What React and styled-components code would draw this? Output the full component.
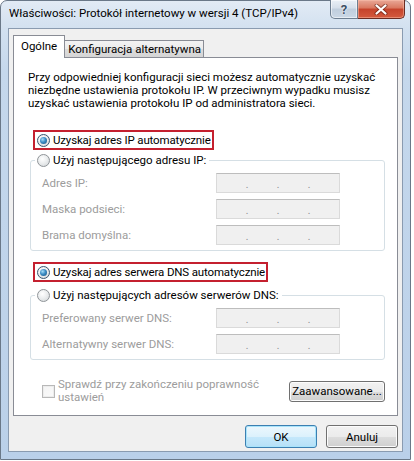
import React from 'react';
import styled, { createGlobalStyle } from 'styled-components';

const GlobalStyle = createGlobalStyle`
  html, body {
    margin: 0;
    padding: 0;
    background: #fff;
  }
  body {
    font-family: Roboto, "Liberation Sans", sans-serif;
    font-size: 11.5px;
    color: #000;
  }
  * {
    box-sizing: border-box;
  }
`;

const Window = styled.div`
  width: 411px;
  height: 460px;
  display: flex;
  flex-direction: column;
  border: 1px solid #6a7888;
  border-radius: 7px 7px 0 0;
  background: linear-gradient(180deg, #e2ebf5 0px, #d3e1f0 26px, #c5d8ec 70px, #bad0e9 100%);
  padding: 0 7px 7px;
`;

const TitleBar = styled.div`
  height: 27px;
  display: flex;
  align-items: flex-start;
`;

const Title = styled.div`
  flex: 1;
  padding: 5px 0 0 1px;
  line-height: 15px;
  white-space: nowrap;
`;

const CaptionButtons = styled.div`
  display: flex;
  margin: -1px -2px 0 0;
`;

const HelpButton = styled.div`
  width: 28px;
  height: 19px;
  display: flex;
  align-items: center;
  justify-content: center;
  border: 1px solid #6e7f91;
  border-top: none;
  border-radius: 0 0 0 5px;
  background: linear-gradient(180deg, #eaf0f6 0%, #d5dfea 45%, #c0cedd 50%, #cbd8e6 100%);
  box-shadow: inset 0 0 0 1px rgba(255, 255, 255, 0.55);
  color: #3d4f66;
  font-weight: bold;
  font-size: 13px;
  text-shadow: 0 0 2px #fff, 0 0 1px #fff;
`;

const CloseButton = styled.div`
  width: 47px;
  height: 19px;
  display: flex;
  align-items: center;
  justify-content: center;
  border: 1px solid #6b2c22;
  border-left: none;
  border-top: none;
  border-radius: 0 0 5px 0;
  background: linear-gradient(180deg, #e9a897 0%, #d9775f 45%, #c5432b 50%, #d45a3e 100%);
  box-shadow: inset 0 0 0 1px rgba(255, 200, 180, 0.45);
`;

const Client = styled.div`
  flex: 1;
  display: flex;
  flex-direction: column;
  background: #f0f0f0;
  border: 1px solid #8a9bb0;
  padding: 6px 4px 0;
`;

const TabStrip = styled.div`
  display: flex;
  align-items: flex-end;
  height: 23px;
  margin-bottom: -1px;
  position: relative;
  z-index: 1;
`;

const Tab = styled.div`
  display: flex;
  align-items: center;
  border: 1px solid #898c95;
  ${p => p.$active ? `
    height: 23px;
    padding: 0 7px 2px;
    background: #fff;
    border-bottom: none;
  ` : `
    height: 18px;
    padding: 0 2px 0 3px;
    border-left: none;
    background: linear-gradient(180deg, #f3f3f3 0%, #ebebeb 50%, #dddddd 51%, #d5d5d5 100%);
  `}
`;

const Panel = styled.div`
  display: flex;
  flex-direction: column;
  background: #fff;
  border: 1px solid #898c95;
  padding: 13px 12px 11px 14px;
`;

const Intro = styled.p`
  margin: 0;
  line-height: 13px;
  white-space: nowrap;
`;

const Highlight = styled.div`
  align-self: flex-start;
  display: flex;
  align-items: center;
  gap: 3px;
  height: 20px;
  margin: ${p => p.$top}px 0 0 5px;
  padding: 0 1px 0 2px;
  border: 2px solid #c4202f;
  letter-spacing: -0.15px;
`;

const Radio = styled.span`
  position: relative;
  width: 13px;
  height: 13px;
  flex: none;
  border-radius: 50%;
  border: 1px solid ${p => p.$checked ? '#3b5670' : '#8f9498'};
  background: radial-gradient(circle at 40% 35%, #ffffff 0%, #eceeef 45%, #cfd3d6 100%);

  ${p => p.$checked && `
    &::after {
      content: '';
      position: absolute;
      left: 2px;
      top: 2px;
      width: 7px;
      height: 7px;
      border-radius: 50%;
      background: radial-gradient(circle at 38% 35%, #a6ddf8 0%, #3b8cc4 45%, #164f7e 100%);
    }
  `}
`;

const Group = styled.fieldset`
  margin: ${p => p.$top}px 0 0 2px;
  padding: 0;
  min-width: 0;
  border: 1px solid #d5dfe5;
  border-radius: 3px;
`;

const Legend = styled.legend`
  display: flex;
  align-items: center;
  gap: 3px;
  margin-left: 4px;
  padding: 0 3px 0 2px;
  line-height: 16px;
`;

const Rows = styled.div`
  display: grid;
  grid-template-columns: 1fr 124px;
  row-gap: 6px;
  align-items: center;
  padding: 5px 44px 5px 11px;
`;

const FieldLabel = styled.span`
  color: #9c9c9c;
`;

const IpField = styled.div`
  height: 20px;
  display: flex;
  align-items: center;
  border: 1px solid #dadada;
  border-top-color: #bdbdbd;
  background: #f0f0f0;
`;

const Segment = styled.span`
  flex: 1;
`;

const Dot = styled.span`
  width: 2px;
  display: flex;
  justify-content: center;
  color: #8c8c8c;
  font-size: 10px;
  line-height: 10px;
  padding-top: 3px;
`;

const BottomRow = styled.div`
  display: flex;
  align-items: center;
  justify-content: space-between;
  margin-top: 18px;
  padding-left: 14px;
`;

const CheckLabel = styled.div`
  display: flex;
  align-items: center;
  gap: 3px;
  color: #9c9c9c;
  line-height: 13px;
`;

const CheckBox = styled.span`
  width: 13px;
  height: 13px;
  flex: none;
  border: 1px solid #b8b8b8;
  background: linear-gradient(135deg, #f4f4f4, #fafafa);
  box-shadow: inset 0 0 0 1px #ececec;
`;

const Button = styled.div`
  height: ${p => p.$height || 21}px;
  width: ${p => p.$width}px;
  display: flex;
  align-items: center;
  justify-content: center;
  border: 1px solid ${p => p.$default ? '#3c7fb1' : '#707070'};
  border-radius: 3px;
  background: ${p => p.$default
    ? 'linear-gradient(180deg, #ecf7fd 0%, #dcf1fc 50%, #c5e8fb 51%, #b6e0f7 100%)'
    : 'linear-gradient(180deg, #f2f2f2 0%, #ebebeb 50%, #dddddd 51%, #cfcfcf 100%)'};
  box-shadow: inset 0 0 0 1px ${p => p.$default ? '#a9e4fb' : '#fcfcfc'};
`;

const Footer = styled.div`
  display: flex;
  justify-content: flex-end;
  gap: 9px;
  padding-top: 9px;
`;

const IpInput = () => (
  <IpField>
    <Segment /><Dot>.</Dot><Segment /><Dot>.</Dot><Segment /><Dot>.</Dot><Segment />
  </IpField>
);

const CloseIcon = () => (
  <svg width="14" height="11" viewBox="0 0 14 11">
    <path d="M2.5 1.5 L11.5 9.5 M11.5 1.5 L2.5 9.5" stroke="rgba(80,20,10,0.55)" strokeWidth="4" strokeLinecap="round" fill="none" />
    <path d="M2.5 1.5 L11.5 9.5 M11.5 1.5 L2.5 9.5" stroke="#fff" strokeWidth="2.2" strokeLinecap="round" fill="none" />
  </svg>
);

const App = () => {
  return (
    <>
      <GlobalStyle />
      <Window>
        <TitleBar>
          <Title>Właściwości: Protokół internetowy w wersji 4 (TCP/IPv4)</Title>
          <CaptionButtons>
            <HelpButton>?</HelpButton>
            <CloseButton><CloseIcon /></CloseButton>
          </CaptionButtons>
        </TitleBar>
        <Client>
          <TabStrip>
            <Tab $active>Ogólne</Tab>
            <Tab>Konfiguracja alternatywna</Tab>
          </TabStrip>
          <Panel>
            <Intro>
              Przy odpowiedniej konfiguracji sieci możesz automatycznie uzyskać<br />
              niezbędne ustawienia protokołu IP. W przeciwnym wypadku musisz<br />
              uzyskać ustawienia protokołu IP od administratora sieci.
            </Intro>

            <Highlight $top={20}>
              <Radio $checked />
              Uzyskaj adres IP automatycznie
            </Highlight>
            <Group $top={2}>
              <Legend><Radio />Użyj następującego adresu IP:</Legend>
              <Rows>
                <FieldLabel>Adres IP:</FieldLabel>
                <IpInput />
                <FieldLabel>Maska podsieci:</FieldLabel>
                <IpInput />
                <FieldLabel>Brama domyślna:</FieldLabel>
                <IpInput />
              </Rows>
            </Group>

            <Highlight $top={11}>
              <Radio $checked />
              Uzyskaj adres serwera DNS automatycznie
            </Highlight>
            <Group $top={5}>
              <Legend><Radio />Użyj następujących adresów serwerów DNS:</Legend>
              <Rows>
                <FieldLabel>Preferowany serwer DNS:</FieldLabel>
                <IpInput />
                <FieldLabel>Alternatywny serwer DNS:</FieldLabel>
                <IpInput />
              </Rows>
            </Group>

            <BottomRow>
              <CheckLabel>
                <CheckBox />
                <span>Sprawdź przy zakończeniu poprawność<br />ustawień</span>
              </CheckLabel>
              <Button $width={96}>Zaawansowane...</Button>
            </BottomRow>
          </Panel>
          <Footer>
            <Button $default $width={72} $height={23}>OK</Button>
            <Button $width={72} $height={23}>Anuluj</Button>
          </Footer>
        </Client>
      </Window>
    </>
  );
};

export default App;
